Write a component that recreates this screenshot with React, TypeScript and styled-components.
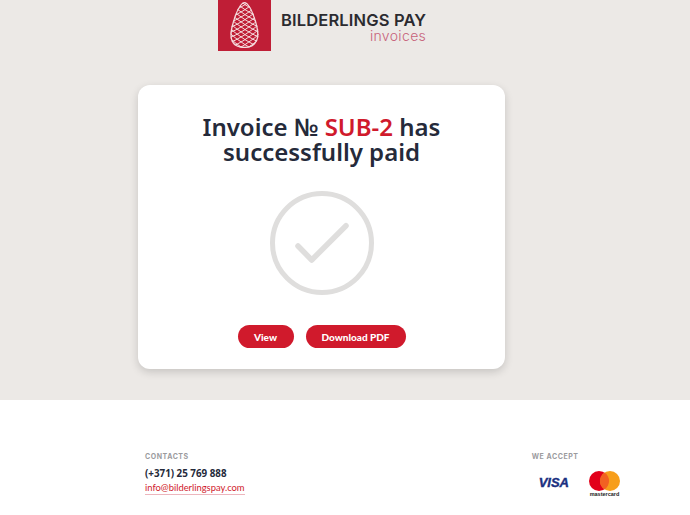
import * as React from 'react';
import styled, {createGlobalStyle} from 'styled-components';

const GlobalStyle = createGlobalStyle`
  html, body {
    margin: 0;
    padding: 0;
    background: #fff;
    font-family: "Noto Sans", "Open Sans", sans-serif;
  }
`;

const Top = styled.section`
  height: 400px;
  background: #ece9e6;
  box-sizing: border-box;
`;

const Header = styled.header`
  display: flex;
  align-items: flex-start;
  height: 85px;
  padding-left: 218px;
`;

const LogoMark = styled.div`
  width: 53px;
  height: 51px;
  background: #bf1e36;
`;

const LogoText = styled.div`
  margin-left: 10px;
  padding-top: 12px;
  display: flex;
  flex-direction: column;
  align-items: flex-end;
  font-family: "Inter", "Liberation Sans", sans-serif;
`;

const LogoName = styled.div`
  font-size: 16.5px;
  line-height: 17px;
  font-weight: 600;
  letter-spacing: 0.15px;
  color: #2b2b30;
  white-space: nowrap;
`;

const LogoSub = styled.div`
  font-size: 14px;
  line-height: 14px;
  font-weight: 300;
  letter-spacing: 0.35px;
  color: #c7627a;
`;

const Card = styled.main`
  box-sizing: border-box;
  width: 367px;
  height: 284px;
  margin-left: 138px;
  padding-top: 29px;
  background: #fff;
  border-radius: 12px;
  box-shadow: 0 3px 8px rgba(0, 0, 0, 0.16);
  display: flex;
  flex-direction: column;
  align-items: center;
`;

const Title = styled.h1`
  margin: 0;
  font-size: 24px;
  line-height: 25px;
  font-weight: 600;
  color: #252a3a;
  text-align: center;
`;

const Accent = styled.span`
  color: #d01a2c;
`;

const Check = styled.svg`
  display: block;
  margin-top: 27px;
`;

const Actions = styled.div`
  display: flex;
  gap: 12px;
  margin-top: 30px;
`;

const Button = styled.a<{$w: number}>`
  display: flex;
  align-items: center;
  justify-content: center;
  height: 23px;
  width: ${p => p.$w}px;
  border-radius: 12px;
  background: #d01a2c;
  color: #fff;
  font-family: "Lato", sans-serif;
  font-size: 10px;
  font-weight: 900;
`;

const Footer = styled.footer`
  display: flex;
  justify-content: space-between;
  padding: 52px 70px 0 145px;
  height: 115px;
  box-sizing: border-box;
`;

const Column = styled.div`
  display: flex;
  flex-direction: column;
`;

const Label = styled.div`
  font-family: "Inter", "Liberation Sans", sans-serif;
  font-size: 7px;
  line-height: 9px;
  font-weight: 700;
  letter-spacing: 0.55px;
  color: #9b9b9e;
`;

const Phone = styled.div`
  margin-top: 6px;
  font-size: 9.8px;
  line-height: 14px;
  font-weight: 700;
  color: #252a3a;
`;

const Mail = styled.a`
  align-self: flex-start;
  margin-top: 0;
  font-family: "Lato", sans-serif;
  font-size: 9.4px;
  line-height: 13px;
  color: #d01a2c;
  border-bottom: 1px solid #ecb6bd;
`;

const Cards = styled.div`
  display: flex;
  align-items: flex-start;
  gap: 20px;
  margin-top: 10px;
  padding-left: 7px;
`;

const Visa = styled.div`
  margin-top: 4px;
  font-family: "Liberation Sans", sans-serif;
  font-style: italic;
  font-weight: 700;
  font-size: 13px;
  line-height: 15px;
  color: #1a2f80;
  -webkit-text-stroke: 0.4px #1a2f80;
`;

const Master = styled.div`
  display: flex;
  flex-direction: column;
  align-items: center;
`;

const MasterWord = styled.div`
  font-family: "Liberation Sans", sans-serif;
  font-size: 5.5px;
  line-height: 6px;
  font-weight: 700;
  color: #222;
`;

const coneShape =
  'M26.5 2 C30 2 34 9 37 18 C40 27 42 35 39 41 C36 47 31 48 26.5 48 C22 48 16 47 13.5 41 C11 35 13 27 16 18 C19 9 23 2 26.5 2 Z';

const Pinecone = () => (
  <svg width="53" height="51" viewBox="0 0 53 51">
    <defs>
      <clipPath id="cone">
        <path d={coneShape} />
      </clipPath>
    </defs>
    <g clipPath="url(#cone)" fill="none" stroke="#f5dcdd" strokeWidth="1">
      <path d={coneShape} strokeWidth="2.4" />
      {Array.from({length: 14}, (_, i) => (
        <React.Fragment key={i}>
          <path d={`M8 ${i * 5 + 4} Q26 ${i * 5 - 2} 46 ${i * 5 - 20}`} />
          <path d={`M46 ${i * 5 + 4} Q28 ${i * 5 - 2} 8 ${i * 5 - 20}`} />
        </React.Fragment>
      ))}
    </g>
  </svg>
);

export default function App() {
  return (
    <>
      <GlobalStyle />
      <Top>
        <Header>
          <LogoMark>
            <Pinecone />
          </LogoMark>
          <LogoText>
            <LogoName>BILDERLINGS PAY</LogoName>
            <LogoSub>invoices</LogoSub>
          </LogoText>
        </Header>
        <Card>
          <Title>
            Invoice № <Accent>SUB-2</Accent> has
            <br />
            successfully paid
          </Title>
          <Check width="104" height="104" viewBox="0 0 104 104">
            <circle cx="52" cy="52" r="49.5" fill="none" stroke="#dfdedd" strokeWidth="5" />
            <path d="M28 55 L41.7 69 L76 34.7" fill="none" stroke="#dfdedd" strokeWidth="5.5" strokeLinecap="round" strokeLinejoin="round" />
          </Check>
          <Actions>
            <Button $w={56}>View</Button>
            <Button $w={100}>Download PDF</Button>
          </Actions>
        </Card>
      </Top>
      <Footer>
        <Column>
          <Label>CONTACTS</Label>
          <Phone>(+371) 25 769 888</Phone>
          <Mail>info@bilderlingspay.com</Mail>
        </Column>
        <Column>
          <Label>WE ACCEPT</Label>
          <Cards>
            <Visa>VISA</Visa>
            <Master>
              <svg width="31" height="20" viewBox="0 0 31 20">
                <circle cx="10" cy="10" r="10" fill="#e2001a" />
                <circle cx="21" cy="10" r="10" fill="#f79e1b" />
                <path d="M15.5 1.6 A10 10 0 0 1 15.5 18.4 A10 10 0 0 1 15.5 1.6 Z" fill="#f26122" />
              </svg>
              <MasterWord>mastercard</MasterWord>
            </Master>
          </Cards>
        </Column>
      </Footer>
    </>
  );
}
